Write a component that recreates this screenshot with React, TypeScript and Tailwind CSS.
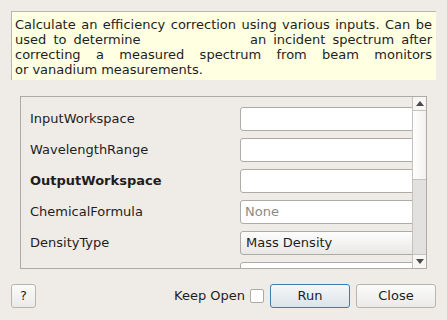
import React from "react";

const rows: { label: string; kind: "input" | "combo"; bold?: boolean; value?: string; placeholder?: string }[] = [
  { label: "InputWorkspace", kind: "input" },
  { label: "WavelengthRange", kind: "input" },
  { label: "OutputWorkspace", kind: "input", bold: true },
  { label: "ChemicalFormula", kind: "input", placeholder: "None" },
  { label: "DensityType", kind: "combo", value: "Mass Density" },
  { label: "", kind: "input" },
];

const Triangle: React.FC<{ up?: boolean }> = ({ up }) => (
  <svg width="8" height="5" viewBox="0 0 8 5">
    {up ? <path d="M0 5 L4 0 L8 5 Z" fill="#4a4a4a" /> : <path d="M0 0 L8 0 L4 5 Z" fill="#4a4a4a" />}
  </svg>
);

export default function App() {
  return (
    <div className="w-[447px] h-[320px] bg-[#efebe7] flex flex-col text-[13px] text-[#1e1e1e] font-['DejaVu_Sans',sans-serif] overflow-hidden">
      {/* Description */}
      <div className="mt-[11px] mx-[11px] h-[69px] bg-[#ffffe1] border-l border-t border-[#b9b6b1] pl-[3px] pr-[4px] pt-[5px] leading-[15px]">
        <div className="text-justify [text-align-last:justify]">Calculate an efficiency correction using various inputs. Can be</div>
        <div className="flex justify-between [word-spacing:3px]">
          <span>used to determine</span>
          <span>an incident spectrum after</span>
        </div>
        <div className="text-justify [text-align-last:justify]">correcting a measured spectrum from beam monitors</div>
        <div>or vanadium measurements.</div>
      </div>

      {/* Properties scroll area */}
      <div className="mt-[16px] mx-[20px] h-[173px] border border-[#aeaba6] flex">
        <div className="flex-1 overflow-hidden pt-[10px] pl-[9px] flex flex-col gap-[7px]">
          {rows.map((r, i) => (
            <div key={i} className="flex items-center h-[24px] shrink-0">
              <div className={`w-[210px] shrink-0 ${r.bold ? "font-bold" : ""}`}>{r.label}</div>
              {r.kind === "combo" ? (
                <div className="w-[200px] shrink-0 h-[24px] rounded-[3px] border border-[#aeaba6] bg-gradient-to-b from-[#fdfdfd] to-[#e9e8e6] flex items-center pl-[5px]">
                  {r.value}
                </div>
              ) : (
                <div className="w-[200px] shrink-0 h-[24px] rounded-[3px] border border-[#aeaba6] bg-white flex items-center pl-[4px] text-[#8a8a8a]">
                  {r.placeholder}
                </div>
              )}
            </div>
          ))}
        </div>
        {/* Scrollbar */}
        <div className="w-[14px] border-l border-[#c5c2bd] flex flex-col">
          <div className="h-[14px] border-b border-[#c5c2bd] bg-[#f7f6f5] flex items-center justify-center">
            <Triangle up />
          </div>
          <div className="h-[69px] border-b border-[#c5c2bd] bg-gradient-to-r from-[#ffffff] to-[#f1f0ee]" />
          <div className="flex-1 bg-[#e2e1df]" />
          <div className="h-[14px] border-t border-[#c5c2bd] bg-[#f7f6f5] flex items-center justify-center">
            <Triangle />
          </div>
        </div>
      </div>

      {/* Buttons */}
      <div className="mt-[15px] mx-[11px] flex items-center">
        <button className="w-[25px] h-[24px] rounded-[3px] border border-[#b8b4ae] bg-gradient-to-b from-[#fbfbfa] to-[#ebeae8] flex items-center justify-center">
          ?
        </button>
        <div className="flex-1" />
        <span>Keep Open</span>
        <div className="ml-[5px] w-[14px] h-[14px] border border-[#aeaba6] bg-white rounded-[2px]" />
        <button className="ml-[6px] w-[80px] h-[24px] rounded-[3px] border border-[#3b7cb4] bg-gradient-to-b from-[#f5f7f9] to-[#dde3e8]">
          Run
        </button>
        <button className="ml-[6px] w-[80px] h-[24px] rounded-[3px] border border-[#b8b4ae] bg-gradient-to-b from-[#fbfbfa] to-[#ebeae8]">
          Close
        </button>
      </div>
    </div>
  );
}
